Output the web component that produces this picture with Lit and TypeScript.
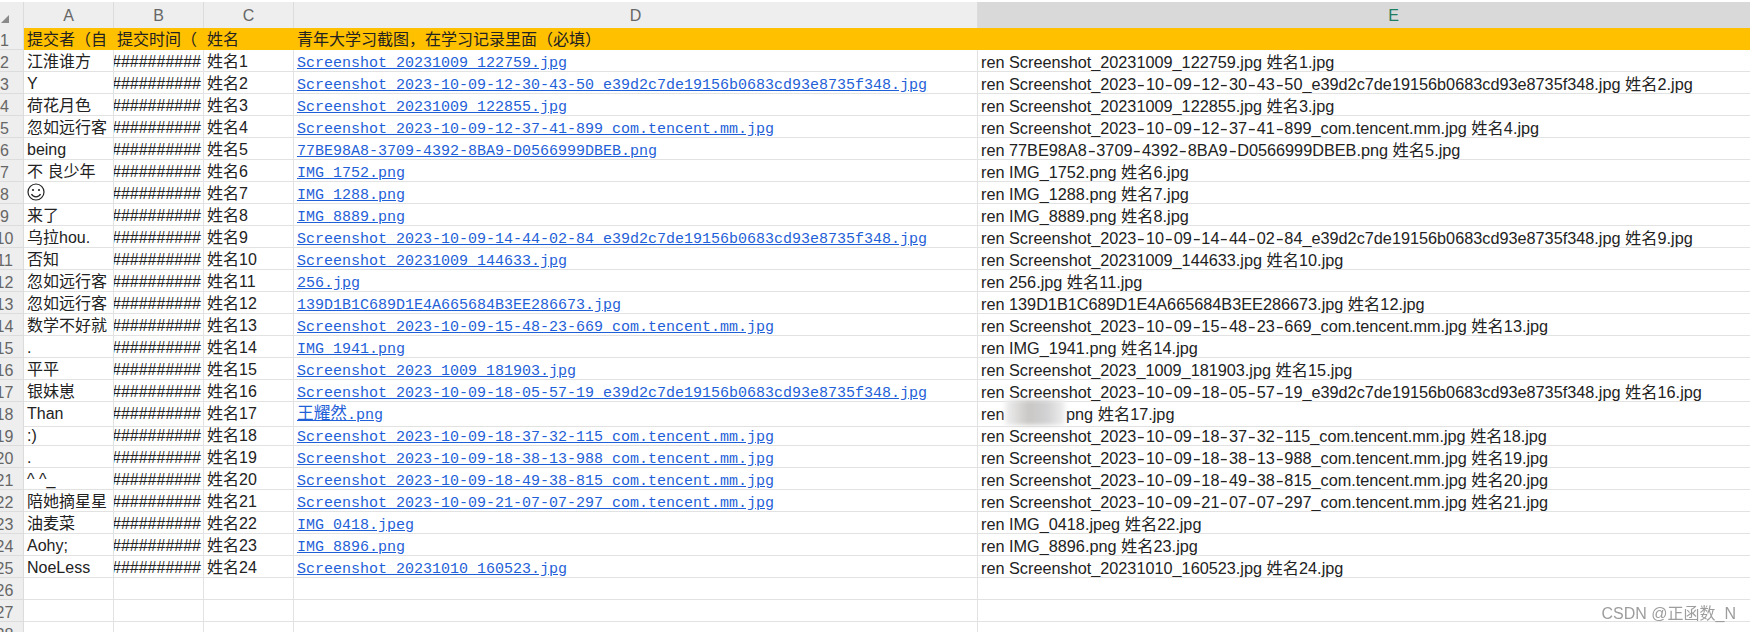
import { LitElement, html, css } from "lit";
import { customElement } from "lit/decorators.js";

const S = "Screenshot_";
const LONG = "_e39d2c7de19156b0683cd93e8735f348.jpg";
const rows: [string, string][] = [
  ["江淮谁方", S + "20231009_122759.jpg"],
  ["Y", S + "2023-10-09-12-30-43-50" + LONG],
  ["荷花月色", S + "20231009_122855.jpg"],
  ["忽如远行客", S + "2023-10-09-12-37-41-899_com.tencent.mm.jpg"],
  ["being", "77BE98A8-3709-4392-8BA9-D0566999DBEB.png"],
  ["不 良少年", "IMG_1752.png"],
  ["", "IMG_1288.png"],
  ["来了", "IMG_8889.png"],
  ["乌拉hou.", S + "2023-10-09-14-44-02-84" + LONG],
  ["否知", S + "20231009_144633.jpg"],
  ["忽如远行客", "256.jpg"],
  ["忽如远行客", "139D1B1C689D1E4A665684B3EE286673.jpg"],
  ["数学不好就", S + "2023-10-09-15-48-23-669_com.tencent.mm.jpg"],
  [".", "IMG_1941.png"],
  ["平平", S + "2023_1009_181903.jpg"],
  ["银妹崽", S + "2023-10-09-18-05-57-19" + LONG],
  ["Than", "王耀然.png"],
  [":)", S + "2023-10-09-18-37-32-115_com.tencent.mm.jpg"],
  [".", S + "2023-10-09-18-38-13-988_com.tencent.mm.jpg"],
  ["^ ^_", S + "2023-10-09-18-49-38-815_com.tencent.mm.jpg"],
  ["陪她摘星星", S + "2023-10-09-21-07-07-297_com.tencent.mm.jpg"],
  ["油麦菜", "IMG_0418.jpeg"],
  ["Aohy;", "IMG_8896.png"],
  ["NoeLess", S + "20231010_160523.jpg"],
];

@customElement("app-root")
export class AppRoot extends LitElement {
  static styles = css`
    :host {
      display: block;
      position: relative;
      width: 1750px;
      height: 632px;
      overflow: hidden;
      background: #fff;
      font-family: "Liberation Sans", "Noto Sans CJK SC", sans-serif;
      font-size: 16px;
      color: #222;
      padding-top: 2px;
      box-sizing: border-box;
    }
    .row {
      display: grid;
      grid-template-columns: 24px 90px 90px 90px 684px 832px;
      height: 22px;
    }
    .cell {
      box-sizing: border-box;
      border-right: 1px solid #e2e2e2;
      border-bottom: 1px solid #e2e2e2;
      padding-left: 3px;
      line-height: 24px;
      white-space: nowrap;
      overflow: hidden;
    }
    .cell.open {
      overflow: visible;
    }
    .cmd {
      font-size: 16.25px;
    }
    .heads {
      height: 26px;
      background: #eeeeee;
    }
    .head {
      box-sizing: border-box;
      border-right: 1px solid #dcdcdc;
      border-bottom: 1px solid #d8d8d8;
      text-align: center;
      line-height: 27px;
      color: #666;
    }
    .head.sel {
      background: #d9d9d9;
      border-bottom: 2px solid #3c8a3c;
      color: #1e7d5e;
    }
    .corner {
      display: flex;
      align-items: flex-end;
      padding: 0 0 7px 1px;
    }
    .num {
      box-sizing: border-box;
      background: #eeeeee;
      color: #666;
      line-height: 25px;
      border-bottom: 1px solid #dcdcdc;
      border-right: 1px solid #dcdcdc;
      overflow: hidden;
      white-space: nowrap;
    }
    .digits {
      display: flex;
      justify-content: center;
      width: 9px;
    }
    .title .cell {
      background: #ffc000;
      border-color: #ffc000;
    }
    .hash {
      padding-left: 0;
      padding-right: 2px;
      display: flex;
      justify-content: flex-end;
    }
    .link {
      color: #1f5fd8;
      text-decoration: underline;
      font-family: "Liberation Mono", "Noto Sans CJK SC", monospace;
      font-size: 15px;
    }
    .wide {
      font-size: 16.7px;
    }
    .dash {
      display: inline-block;
      width: 9.6px;
      text-align: center;
      transform: scaleX(1.5);
    }
    .smile {
      display: block;
      width: 18px;
      height: 18px;
      margin-top: 1px;
    }
    .blur {
      display: inline-block;
      position: relative;
      width: 60px;
      height: 25px;
      margin: -2px 1px 0 -4px;
      vertical-align: top;
      background: linear-gradient(90deg, #f0f0f0, #c9c7c5 40%, #d2d2d4 70%, #f0f0f0);
      filter: blur(2px);
    }
    .mark {
      position: absolute;
      right: 14px;
      top: 604px;
      font-size: 16px;
      line-height: 19px;
      color: #8c8c8c;
      opacity: 0.85;
    }
  `;

  private dashed(s: string) {
    const parts = s.split("-");
    return parts.map((p, i) => (i === 0 ? p : html`<span class="dash">-</span>${p}`));
  }

  private target(file: string, i: number) {
    const name = `姓名${i + 1}.jpg`;
    if (file === "王耀然.png") {
      return html`ren <span class="blur"></span>png ${name}`;
    }
    return html`ren ${this.dashed(file)} ${name}`;
  }

  private link(file: string) {
    if (file === "王耀然.png") {
      return html`<span class="link"><span class="wide">王耀然</span>.png</span>`;
    }
    return html`<span class="link">${file}</span>`;
  }

  render() {
    return html`
      <div class="row heads">
        <div class="head corner">
          <svg width="8" height="8" viewBox="0 0 8 8"><path d="M8 0V8H0Z" fill="#8a8a8a" /></svg>
        </div>
        <div class="head">A</div>
        <div class="head">B</div>
        <div class="head">C</div>
        <div class="head">D</div>
        <div class="head sel">E</div>
      </div>
      <div class="row title">
        <div class="num"><span class="digits">1</span></div>
        <div class="cell">提交者（自</div>
        <div class="cell">提交时间（</div>
        <div class="cell">姓名</div>
        <div class="cell">青年大学习截图，在学习记录里面（必填）</div>
        <div class="cell"></div>
      </div>
      ${rows.map(
        (r, i) => html`
          <div class="row">
            <div class="num"><span class="digits">${i + 2}</span></div>
            <div class="cell">
              ${r[0] === ""
                ? html`<svg class="smile" viewBox="0 0 18 18" fill="none" stroke="#222" stroke-width="1.2">
                    <circle cx="9" cy="9" r="8" />
                    <circle cx="6" cy="7" r="1.1" fill="#222" stroke="none" />
                    <circle cx="12" cy="7" r="1.1" fill="#222" stroke="none" />
                    <path d="M4.5 11a5 5 0 0 0 9 0" />
                  </svg>`
                : r[0]}
            </div>
            <div class="cell hash"><span>##########</span></div>
            <div class="cell">姓名${i + 1}</div>
            <div class="cell">${this.link(r[1])}</div>
            <div class="cell cmd ${r[1] === "王耀然.png" ? "open" : ""}">${this.target(r[1], i)}</div>
          </div>
        `
      )}
      ${[26, 27, 28].map(
        (n) => html`
          <div class="row">
            <div class="num"><span class="digits">${n}</span></div>
            <div class="cell"></div>
            <div class="cell"></div>
            <div class="cell"></div>
            <div class="cell"></div>
            <div class="cell"></div>
          </div>
        `
      )}
      <div class="mark">CSDN @正函数_N</div>
    `;
  }
}
